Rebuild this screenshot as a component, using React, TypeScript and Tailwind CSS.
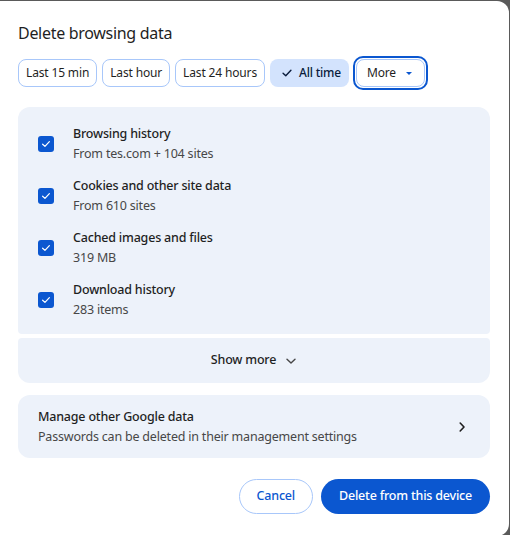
import React from "react";

const font = { fontFamily: '"Noto Sans", "Open Sans", Arial, sans-serif' };

function CheckIcon({ className }: { className?: string }) {
  return (
    <svg viewBox="0 0 16 16" className={className} fill="none">
      <path d="M3.5 8.3 L6.6 11.2 L12.5 4.8" stroke="currentColor" strokeWidth="1.6" strokeLinecap="round" strokeLinejoin="round" />
    </svg>
  );
}

function Chip({ label, selected }: { label: string; selected?: boolean }) {
  if (selected) {
    return (
      <button className="h-[28px] pl-[10px] pr-[8px] rounded-[8px] bg-[#d3e3fd] text-[#0a1c3c] text-[12px] tracking-[-0.2px] flex items-center gap-[5px] font-medium">
        <CheckIcon className="w-[14px] h-[14px] text-[#0a1c3c]" />
        {label}
      </button>
    );
  }
  return (
    <button className="h-[28px] px-[7px] rounded-[8px] border border-[#a8c7fa] text-[#1f1f1f] text-[12px] tracking-[-0.15px] flex items-center bg-white">
      {label}
    </button>
  );
}

function Row({ title, sub }: { title: string; sub: string }) {
  return (
    <div className="flex items-center h-[52px] pl-[20px]">
      <div className="w-[16px] h-[16px] rounded-[3px] bg-[#0b57d0] flex items-center justify-center text-white">
        <CheckIcon className="w-[12px] h-[12px]" />
      </div>
      <div className="ml-[19px] flex flex-col">
        <div className="text-[12.5px] tracking-[-0.2px] leading-[20px] font-medium text-[#1f1f1f]">{title}</div>
        <div className="text-[12.5px] tracking-[-0.2px] leading-[20px] text-[#474747]">{sub}</div>
      </div>
    </div>
  );
}

export default function App() {
  return (
    <div className="w-[510px] h-[535px] bg-[#5a5a5a] overflow-hidden" style={font}>
      <div className="ml-[-14px] mt-[1px] w-[523px] h-[535px] bg-white rounded-[12px] pl-[32px] pr-[19px]">
        <h1 className="pt-[21px] text-[16px] tracking-[-0.3px] leading-[22px] text-[#1f1f1f]">Delete browsing data</h1>
        <div className="mt-[15px] flex items-center gap-[5px]">
          <Chip label="Last 15 min" />
          <Chip label="Last hour" />
          <Chip label="Last 24 hours" />
          <Chip label="All time" selected />
          <div className="rounded-[10px] border-2 border-[#0b57d0] p-[1px] ml-[-1px] -my-[3px]">
            <button className="h-[28px] pl-[10px] pr-[12px] rounded-[8px] border border-[#a8c7fa] text-[#1f1f1f] text-[12px] tracking-[-0.15px] flex items-center gap-[10px] bg-white">
              More
              <svg viewBox="0 0 8 4" className="w-[6px] h-[3px]">
                <path d="M0 0 L8 0 L4 4 Z" fill="#0b57d0" />
              </svg>
            </button>
          </div>
        </div>

        <div className="mt-[20px] flex flex-col gap-[4px]">
          <div className="bg-[#edf2fa] rounded-t-[12px] rounded-b-[4px] pt-[11px] pb-[8px]">
            <Row title="Browsing history" sub="From tes.com + 104 sites" />
            <Row title="Cookies and other site data" sub="From 610 sites" />
            <Row title="Cached images and files" sub="319 MB" />
            <Row title="Download history" sub="283 items" />
          </div>
          <div className="bg-[#edf2fa] rounded-b-[12px] rounded-t-[4px] h-[45px] flex items-center justify-center gap-[9px] text-[12.5px] tracking-[-0.2px] font-medium text-[#1f1f1f]">
            Show more
            <svg viewBox="0 0 12 12" className="w-[12px] h-[12px]" fill="none">
              <path d="M2 4.2 L6 8 L10 4.2" stroke="#474747" strokeWidth="1.4" strokeLinecap="round" strokeLinejoin="round" />
            </svg>
          </div>
        </div>

        <div className="mt-[12px] bg-[#edf2fa] rounded-[12px] h-[63px] flex items-center pl-[20px] pr-[22px]">
          <div className="flex-1 flex flex-col">
            <div className="text-[12.5px] tracking-[-0.2px] leading-[20px] font-medium text-[#1f1f1f]">Manage other Google data</div>
            <div className="text-[12.5px] tracking-[-0.2px] leading-[20px] text-[#474747]">Passwords can be deleted in their management settings</div>
          </div>
          <svg viewBox="0 0 12 12" className="w-[12px] h-[12px]" fill="none">
            <path d="M4.2 2 L8 6 L4.2 10" stroke="#1f1f1f" strokeWidth="1.6" strokeLinecap="round" strokeLinejoin="round" />
          </svg>
        </div>

        <div className="mt-[21px] flex justify-end gap-[8px]">
          <button className="h-[35px] px-[17px] rounded-full border border-[#a8c7fa] text-[#0b57d0] text-[12.5px] tracking-[-0.2px] font-medium bg-white">
            Cancel
          </button>
          <button className="h-[35px] px-[18px] rounded-full bg-[#0b57d0] text-white text-[12.5px] tracking-[-0.2px] font-medium">
            Delete from this device
          </button>
        </div>
      </div>
    </div>
  );
}
